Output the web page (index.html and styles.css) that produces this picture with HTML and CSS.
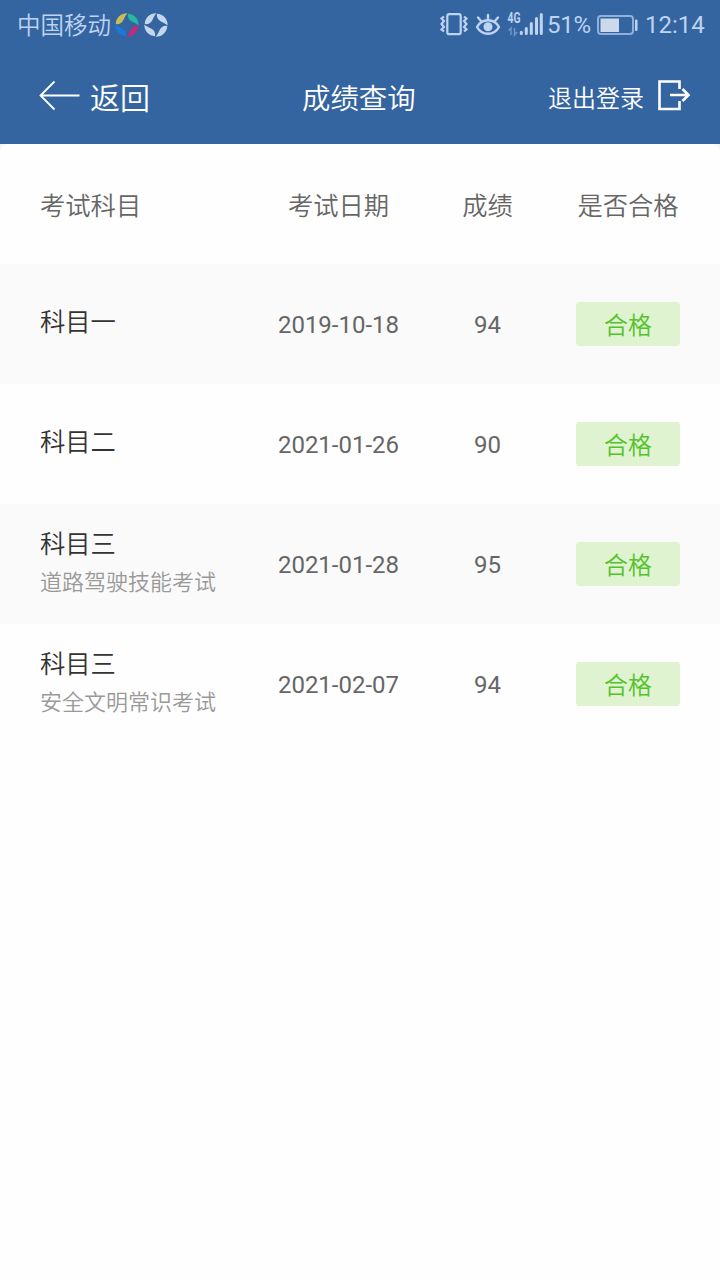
FILE: index.html
```
<!DOCTYPE html>
<html lang="zh-CN">

<head>
    <meta charset="UTF-8">
    <meta name="viewport" content="width=device-width, initial-scale=1.0">
    <title>成绩查询</title>
    <link rel="stylesheet" href="styles.css">
</head>

<body>
    <div class="top">
        <!-- 状态栏 -->
        <div class="status-bar">
            <span class="carrier">中国移动</span>
            <svg class="app-icon" width="24" height="26" viewBox="0 0 24 26">
                <defs>
                    <path id="blade" d="M1 10.500C2 4.500 7.500 0.500 14 1.500C12 3 10.500 5.500 8.800 8C7 10.500 4 11.500 1 10.500Z"/>
                </defs>
                <g transform="rotate(-8 12 13)">
                    <use href="#blade" fill="#c9bd55"/>
                    <use href="#blade" fill="#27b79f" transform="rotate(90 12 13)"/>
                    <use href="#blade" fill="#bd2d7b" transform="rotate(180 12 13)"/>
                    <use href="#blade" fill="#1c78dc" transform="rotate(270 12 13)"/>
                </g>
            </svg>
            <svg class="app-icon" width="26" height="26" viewBox="0 0 24 26">
                <g fill="#c4d7ef" transform="rotate(-8 12 13)">
                    <use href="#blade"/>
                    <use href="#blade" transform="rotate(90 12 13)"/>
                    <use href="#blade" transform="rotate(180 12 13)"/>
                    <use href="#blade" transform="rotate(270 12 13)"/>
                </g>
            </svg>
            <div class="status-right">
                <svg width="104" height="30" viewBox="440 10 104 30">
                    <!-- 振动 -->
                    <g fill="none" stroke="#bdd4f3" stroke-width="2.200">
                        <rect x="447.300" y="14.200" width="13.400" height="20" rx="2"/>
                        <path d="M444 16.500L441.500 18.500L444 21L441.500 24L444 27L441.500 29.500L444 31.500"/>
                        <path d="M464 16.500L466.500 18.500L464 21L466.500 24L464 27L466.500 29.500L464 31.500"/>
                    </g>
                    <!-- 护眼 -->
                    <g fill="none" stroke="#bdd4f3" stroke-width="2.400" stroke-linecap="round">
                        <path d="M477 27C482 18 494 18 499 27C494 36 482 36 477 27Z" stroke-linejoin="round"/>
                        <path d="M488 19.500V15M481 21L478 17.500M495 21L498 17.500"/>
                    </g>
                    <circle cx="488" cy="26.800" r="4.500" fill="#bdd4f3"/>
                    <!-- 信号 -->
                    <text class="network" x="507.500" y="23" textLength="13" lengthAdjust="spacingAndGlyphs">4G</text>
                    <path d="M508.500 30.500L511 28V35M514.500 28V35L517 32" fill="none" stroke="#6f96c9" stroke-width="1.500"/>
                    <g stroke="#bdd4f3" stroke-width="3" stroke-linecap="round">
                        <path d="M521.300 32.300V33.500M526.300 28.500V33.500M531.300 23.500V33.500M536.500 18.500V33.500M541.300 14.500V33.500"/>
                    </g>
                </svg>
                <span class="battery-text">51%</span>
                <svg class="battery" width="42" height="22" viewBox="0 0 42 22">
                    <rect x="1" y="2" width="35" height="18" rx="3" fill="none" stroke="#8fb0dc" stroke-width="2"/>
                    <rect x="3.500" y="4.500" width="18.500" height="13.500" fill="#ccd9ea"/>
                    <rect x="38" y="5.500" width="2.500" height="11.500" rx="1" fill="#bdd4f3"/>
                </svg>
                <span class="time">12:14</span>
            </div>
        </div>

        <!-- 导航栏 -->
        <div class="nav">
            <a class="back">
                <svg width="42" height="32" viewBox="0 0 42 32">
                    <path d="M16.500 1.500L2.500 15.500L16.500 29.500M2.500 15.500H41.500" fill="none" stroke="#fff" stroke-width="1.800"/>
                </svg>
                <span>返回</span>
            </a>
            <h1 class="title">成绩查询</h1>
            <a class="logout">
                <span>退出登录</span>
                <svg width="34" height="32" viewBox="0 0 34 32">
                    <path d="M22.500 9V1.500H2.500V29H22.500V21M13 15H31M25.500 9L31.500 15L25.500 21" fill="none" stroke="#fff" stroke-width="2.600"/>
                </svg>
            </a>
        </div>
    </div>

    <!-- 成绩列表 -->
    <div class="score-list">
        <div class="row head">
            <div class="subject">考试科目</div>
            <div>考试日期</div>
            <div>成绩</div>
            <div>是否合格</div>
        </div>
        <div class="row gray">
            <div class="subject"><p class="name">科目一</p></div>
            <div class="num">2019-10-18</div>
            <div class="num">94</div>
            <div><span class="tag">合格</span></div>
        </div>
        <div class="row">
            <div class="subject"><p class="name">科目二</p></div>
            <div class="num">2021-01-26</div>
            <div class="num">90</div>
            <div><span class="tag">合格</span></div>
        </div>
        <div class="row gray">
            <div class="subject">
                <p class="name">科目三</p>
                <p class="desc">道路驾驶技能考试</p>
            </div>
            <div class="num">2021-01-28</div>
            <div class="num">95</div>
            <div><span class="tag">合格</span></div>
        </div>
        <div class="row">
            <div class="subject">
                <p class="name">科目三</p>
                <p class="desc">安全文明常识考试</p>
            </div>
            <div class="num">2021-02-07</div>
            <div class="num">94</div>
            <div><span class="tag">合格</span></div>
        </div>
    </div>
</body>

</html>
```
FILE: styles.css
```
:root {
    --primary-color: #3565a0;
    --status-color: #bdd4f3;
    --pass-color: #53c22b;
}

* {
    box-sizing: border-box;
    margin: 0;
    padding: 0;
}

body {
    font-family: Roboto, "Noto Sans CJK SC", sans-serif;
    font-weight: 350;
    background-color: #f5f5f5;
    color: #666;
    min-height: 100vh;
}

.top {
    height: 144px;
    background-color: var(--primary-color);
}

.status-bar {
    display: flex;
    align-items: center;
    height: 50px;
    padding: 0 15px 0 17px;
    color: var(--status-color);
    font-size: 24px;
    line-height: 50px;
}

.carrier {
    width: 98px;
    padding-top: 2px;
    font-size: 23.5px;
    white-space: nowrap;
}

.app-icon {
    margin-right: 4px;
}

.status-right {
    display: flex;
    align-items: center;
    margin-left: auto;
    font-weight: 400;
}

.network {
    font-size: 14px;
    font-weight: bold;
    fill: var(--status-color);
}

.battery-text {
    width: 50px;
    padding-left: 3px;
    letter-spacing: -0.3px;
}

.battery {
    margin: 0 6px 0 3px;
}

.time {
    width: 60px;
    white-space: nowrap;
}

.nav {
    display: grid;
    grid-template-columns: 264px 114px 1fr;
    align-items: center;
    height: 91px;
    padding: 0 29px 0 38px;
    color: #fff;
}

.back,
.logout {
    display: flex;
    align-items: center;
    font-size: 24px;
}

.back {
    gap: 10px;
    font-size: 30px;
}

.logout {
    justify-content: flex-end;
    gap: 13px;
}

.logout span {
    padding-top: 1px;
}

.title {
    padding-top: 2px;
    font-size: 28.4px;
    font-weight: 350;
    white-space: nowrap;
}

.score-list {
    min-height: 1136px;
    background-color: #fefefe;
    border-radius: 8px 8px 0 0;
}

.row {
    display: grid;
    grid-template-columns: 198px 201px 97px 184px;
    align-items: center;
    height: 120px;
    padding-left: 40px;
    text-align: center;
    font-size: 24px;
}

.row.head {
    font-size: 25.3px;
}

.row.gray {
    background-color: #fafafa;
}

.num {
    padding-top: 2px;
    font-weight: 400;
}

.subject {
    text-align: left;
}

.name {
    color: #333;
    font-size: 25.3px;
    line-height: 38px;
}

.name:only-child {
    padding-bottom: 3px;
}

.desc {
    color: #999;
    font-size: 22px;
    line-height: 38px;
}

.tag {
    display: block;
    width: 104px;
    height: 44px;
    margin: 0 auto;
    border-radius: 4px;
    background-color: #dff3d0;
    color: var(--pass-color);
    line-height: 49px;
}
```
